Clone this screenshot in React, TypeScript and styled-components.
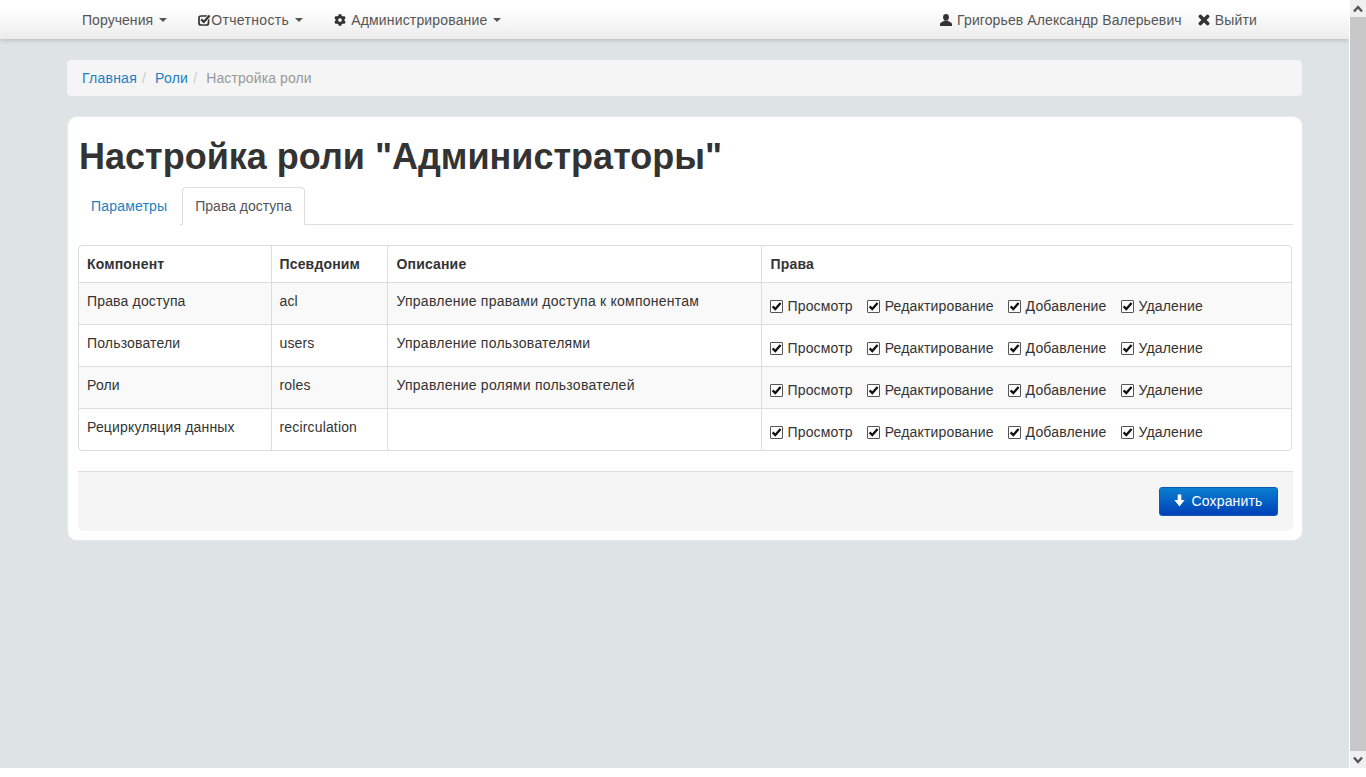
import styled, { createGlobalStyle } from 'styled-components';
import { FaCog } from 'react-icons/fa';

const GlobalStyle = createGlobalStyle`
  html, body {
    margin: 0;
    padding: 0;
    background: #fff;
    overflow: hidden;
  }
  body {
    font-family: "Liberation Sans", Arial, sans-serif;
    font-size: 14px;
    line-height: 20px;
    letter-spacing: 0.16px;
    color: #333;
  }
  * {
    box-sizing: border-box;
  }
`;

const rows = [
  { name: 'Права доступа', alias: 'acl', description: 'Управление правами доступа к компонентам' },
  { name: 'Пользователи', alias: 'users', description: 'Управление пользователями' },
  { name: 'Роли', alias: 'roles', description: 'Управление ролями пользователей' },
  { name: 'Рециркуляция данных', alias: 'recirculation', description: '' },
];

const rights = ['Просмотр', 'Редактирование', 'Добавление', 'Удаление'];

const Check = () => (
  <CheckBox>
    <svg width="11" height="11" viewBox="0 0 11 11">
      <path d="M1.6 5.4 L4.3 8.1 L9.6 2" fill="none" stroke="#111" strokeWidth="2.3" />
    </svg>
  </CheckBox>
);

const Arrow = ({ up }: { up?: boolean }) => (
  <svg width="10" height="8" viewBox="0 0 10 8">
    <path d={up ? 'M1 6.5 L5 2 L9 6.5' : 'M1 1.5 L5 6 L9 1.5'} fill="none" stroke="#555" strokeWidth="2.4" />
  </svg>
);

const CheckSquareIcon = () => (
  <svg width="13" height="12" viewBox="0 0 13 12">
    <rect x="1" y="2" width="9.5" height="9" rx="2" fill="none" stroke="#333" strokeWidth="1.7" />
    <path d="M3.2 5.4 L5.8 8 L11.6 1.6" fill="none" stroke="#fff" strokeWidth="3.6" />
    <path d="M3.2 5.4 L5.8 8 L11.6 1.6" fill="none" stroke="#333" strokeWidth="2.2" />
  </svg>
);

const UserIcon = () => (
  <svg width="12" height="12" viewBox="0 0 12 12">
    <ellipse cx="6" cy="3.2" rx="2.9" ry="3.2" fill="#333" />
    <path d="M0 12 V10 C0 8.2 3 8 4.2 6.4 H7.8 C9 8 12 8.2 12 10 V12 Z" fill="#333" />
  </svg>
);

const TimesIcon = () => (
  <svg width="12" height="12" viewBox="0 0 12 12">
    <path d="M2.4 2.4 L9.6 9.6 M9.6 2.4 L2.4 9.6" fill="none" stroke="#333" strokeWidth="3.6" strokeLinecap="round" />
  </svg>
);

const SaveArrowIcon = () => (
  <svg width="11" height="13" viewBox="0 0 11 13">
    <path d="M3.7 0.5 H7.3 V6 H10.6 L5.5 12.5 L0.4 6 H3.7 Z" fill="#fff" />
  </svg>
);

const App = () => {
  return (
    <Shell>
      <GlobalStyle />
      <Page>
        <Navbar>
          <NavInner>
            <NavGroup>
              <NavItem $tracking={0.05}>
                Поручения
                <Caret />
              </NavItem>
              <NavItem $tracking={0.35}>
                <CheckSquareIcon />
                Отчетность
                <Caret />
              </NavItem>
              <NavItem>
                <CogIcon size={12} />
                Администрирование
                <Caret />
              </NavItem>
            </NavGroup>
            <NavGroup>
              <UserItem $tracking={0.1}>
                <UserIcon />
                Григорьев Александр Валерьевич
              </UserItem>
              <UserItem>
                <TimesIcon />
                Выйти
              </UserItem>
            </NavGroup>
          </NavInner>
        </Navbar>

        <Container>
          <Breadcrumb>
            <Crumb href="#">Главная</Crumb>
            <Divider>/</Divider>
            <Crumb href="#">Роли</Crumb>
            <Divider>/</Divider>
            <CurrentCrumb>Настройка роли</CurrentCrumb>
          </Breadcrumb>

          <Panel>
            <Title>Настройка роли "Администраторы"</Title>
            <Tabs>
              <Tab>Параметры</Tab>
              <Tab $active>Права доступа</Tab>
            </Tabs>

            <TableBox>
              <RolesTable>
                <colgroup>
                  <col width="192" />
                  <col width="116" />
                  <col width="374" />
                  <col />
                </colgroup>
                <thead>
                  <tr>
                    <th>Компонент</th>
                    <th>Псевдоним</th>
                    <th>Описание</th>
                    <th>Права</th>
                  </tr>
                </thead>
                <tbody>
                  {rows.map((row) => (
                    <tr key={row.alias}>
                      <td>{row.name}</td>
                      <td>{row.alias}</td>
                      <td>{row.description}</td>
                      <td>
                        <Rights>
                          {rights.map((right) => (
                            <Right key={right}>
                              <Check />
                              {right}
                            </Right>
                          ))}
                        </Rights>
                      </td>
                    </tr>
                  ))}
                </tbody>
              </RolesTable>
            </TableBox>

            <FormFooter>
              <SaveButton>
                <SaveArrowIcon />
                Сохранить
              </SaveButton>
            </FormFooter>
          </Panel>
        </Container>
      </Page>

      <Scrollbar>
        <ScrollButton>
          <Arrow up />
        </ScrollButton>
        <ScrollThumb />
        <ScrollButton>
          <Arrow />
        </ScrollButton>
      </Scrollbar>
    </Shell>
  );
};

export default App;

const Shell = styled.div`
  display: flex;
  height: 768px;
  width: 1366px;
  background: #fff;
`;

const Page = styled.div`
  width: 1349px;
  height: 768px;
  background: #dee3e6;
  overflow: hidden;
`;

const Navbar = styled.div`
  height: 39px;
  background: linear-gradient(to bottom, #fff 0%, #fff 20%, #ececec 100%);
  box-shadow: 0 1px 5px rgba(0, 0, 0, 0.2);
`;

const NavInner = styled.div`
  width: 1205px;
  margin-left: 67px;
  height: 39px;
  display: flex;
  justify-content: space-between;
`;

const NavGroup = styled.div`
  display: flex;
`;

const NavItem = styled.div<{ $tracking?: number }>`
  display: flex;
  align-items: center;
  padding: 0 16px 0 15px;
  height: 39px;
  color: #555;
  white-space: nowrap;
  letter-spacing: ${(p) => p.$tracking ?? 0.16}px;
`;

const CogIcon = styled(FaCog)`
  color: #333;
  margin-right: 5px;
`;

const UserItem = styled(NavItem)`
  gap: 5px;
  padding: 0 8px;

  &:last-child {
    padding-right: 15px;
  }
`;

const Caret = styled.span`
  margin-left: 6px;
  margin-top: 1px;
  border-top: 4px solid #555;
  border-left: 4px solid transparent;
  border-right: 4px solid transparent;
`;

const Container = styled.div`
  width: 1236px;
  margin-left: 67px;
  padding-top: 21px;
`;

const Breadcrumb = styled.div`
  display: flex;
  width: 1235px;
  height: 36px;
  padding: 8px 15px;
  margin-bottom: 20px;
  background: #f5f5f5;
  border-radius: 4px;
`;

const Crumb = styled.a`
  color: #1b7fc4;
  text-decoration: none;
  letter-spacing: 0.24px;
`;

const Divider = styled.span`
  padding: 0 5px;
  color: #ccc;
  margin-right: 4px;
`;

const CurrentCrumb = styled.span`
  color: #999;
  letter-spacing: 0.1px;
`;

const Panel = styled.div`
  height: 425px;
  padding: 0 9px 0 10px;
  background: #fff;
  border: 1px solid #e6e9eb;
  border-radius: 10px;
`;

const Title = styled.h1`
  margin: 0;
  padding: 20px 0 10px 1px;
  font-size: 36px;
  line-height: 40px;
  font-weight: bold;
  letter-spacing: 0;
  color: #333;
`;

const Tabs = styled.div`
  display: flex;
  height: 38px;
  border-bottom: 1px solid #ddd;
`;

const Tab = styled.div<{ $active?: boolean }>`
  height: 38px;
  margin-right: 2px;
  padding: 8px 12px 0;
  letter-spacing: ${(p) => (p.$active ? '0' : '0.18px')};
  color: ${(p) => (p.$active ? '#555' : '#1b7fc4')};
  background: #fff;
  border: 1px solid ${(p) => (p.$active ? '#ddd' : 'transparent')};
  border-bottom-color: ${(p) => (p.$active ? '#fff' : 'transparent')};
  border-radius: 4px 4px 0 0;
`;

const TableBox = styled.div`
  margin-top: 20px;
  width: 1214px;
  border: 1px solid #ddd;
  border-radius: 4px;
  overflow: hidden;
`;

const RolesTable = styled.table`
  width: 100%;
  table-layout: fixed;
  border-collapse: collapse;

  th,
  td {
    padding: 8px;
    text-align: left;
    vertical-align: top;
    border-left: 1px solid #ddd;
    border-top: 1px solid #ddd;
  }

  th {
    font-weight: bold;
    border-top: none;
  }

  th:first-child,
  td:first-child {
    border-left: none;
  }

  th:nth-child(n + 3),
  td:nth-child(3) {
    padding-left: 9px;
  }

  td:nth-child(3) {
    letter-spacing: 0.24px;
  }

  tbody tr:nth-child(odd) td {
    background: #f9f9f9;
  }
`;

const Rights = styled.div`
  display: flex;
  gap: 14px;
  margin-top: 5px;
`;

const Right = styled.label`
  display: flex;
  align-items: center;
  gap: 5px;
  white-space: nowrap;
`;

const CheckBox = styled.span`
  display: flex;
  align-items: center;
  justify-content: center;
  width: 13px;
  height: 13px;
  background: #fff;
  border: 1px solid #555;
  border-radius: 1px;
`;

const FormFooter = styled.div`
  display: flex;
  justify-content: flex-end;
  align-items: flex-start;
  margin-top: 20px;
  height: 60px;
  padding: 15px 15px 0 0;
  background: #f5f5f5;
  border-top: 1px solid #ddd;
  border-radius: 0 0 6px 6px;
`;

const SaveButton = styled.button`
  display: flex;
  align-items: center;
  justify-content: center;
  gap: 6px;
  width: 119px;
  height: 29px;
  padding: 0 0 2px;
  font-family: inherit;
  font-size: 14px;
  letter-spacing: 0.16px;
  color: #fff;
  background: linear-gradient(to bottom, #0a7fd0 0%, #0040b8 100%);
  border: 1px solid #0a5cb8;
  border-radius: 3px;
`;

const Scrollbar = styled.div`
  display: flex;
  flex-direction: column;
  width: 16px;
  margin-left: 1px;
  background: #f0f0f0;
`;

const ScrollButton = styled.div`
  display: flex;
  align-items: center;
  justify-content: center;
  height: 17px;
`;

const ScrollThumb = styled.div`
  flex: 1;
  background: #c8c8c8;
`;
